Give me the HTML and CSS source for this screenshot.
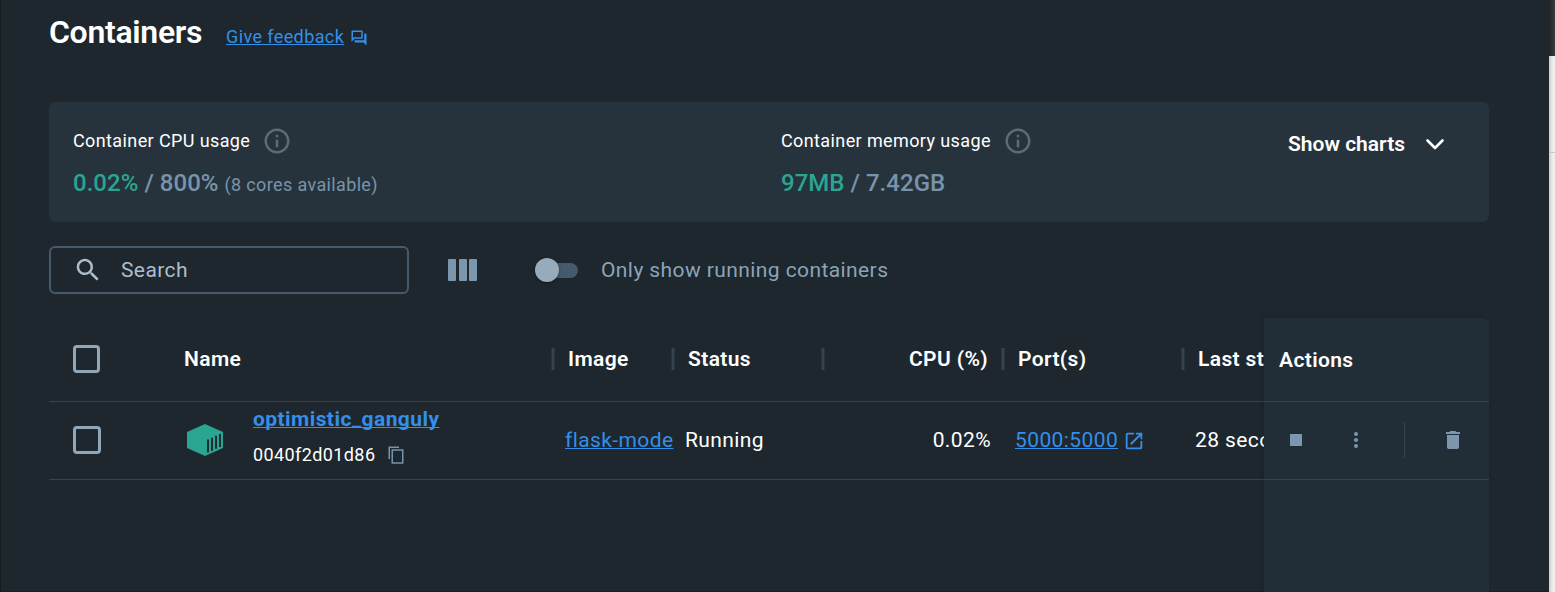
FILE: index.html
```html
<!DOCTYPE html>
<html lang="en">
<head>
<meta charset="utf-8">
<title>Containers</title>
<link rel="stylesheet" href="styles.css">
</head>
<body>
<div class="window">
  <main class="content">
    <header class="page-header">
      <h1 class="title">Containers</h1>
      <a class="feedback" href="#"><span class="feedback-text">Give feedback</span>
        <svg class="feedback-icon" width="18" height="18" viewBox="0 0 24 24" fill="currentColor"><path d="M15 4v7H5.170L4 12.170V4h11m1-2H3c-.550 0-1 .450-1 1v14l4-4h10c.550 0 1-.450 1-1V3c0-.550-.450-1-1-1zm5 4h-2v9H6v2c0 .550.450 1 1 1h11l4 4V7c0-.550-.450-1-1-1z"/></svg>
      </a>
    </header>

    <section class="usage">
      <div class="metric metric-cpu">
        <div class="metric-label"><span class="label-text">Container CPU usage</span>
          <svg class="info" width="30" height="30" viewBox="0 0 24 24" fill="currentColor"><path d="M11 7h2v2h-2zm0 4h2v6h-2zm1-9C6.480 2 2 6.480 2 12s4.480 10 10 10 10-4.480 10-10S17.520 2 12 2zm0 18c-4.410 0-8-3.590-8-8s3.590-8 8-8 8 3.590 8 8-3.590 8-8 8z"/></svg>
        </div>
        <div class="metric-value"><span class="used">0.02%</span> / 800% <span class="note">(8 cores available)</span></div>
      </div>
      <div class="metric metric-memory">
        <div class="metric-label"><span class="label-text">Container memory usage</span>
          <svg class="info" width="30" height="30" viewBox="0 0 24 24" fill="currentColor"><path d="M11 7h2v2h-2zm0 4h2v6h-2zm1-9C6.480 2 2 6.480 2 12s4.480 10 10 10 10-4.480 10-10S17.520 2 12 2zm0 18c-4.410 0-8-3.590-8-8s3.590-8 8-8 8 3.590 8 8-3.590 8-8 8z"/></svg>
        </div>
        <div class="metric-value"><span class="used">97MB</span> / 7.42GB</div>
      </div>
      <div class="show-charts"><span>Show charts</span>
        <svg width="20" height="14" viewBox="0 0 20 14" fill="none" stroke="currentColor" stroke-width="2.600" stroke-linecap="round" stroke-linejoin="round"><path d="M2.500 3.500l7.500 7.500 7.500-7.500"/></svg>
      </div>
    </section>

    <div class="toolbar">
      <div class="search">
        <svg width="30" height="30" viewBox="0 0 24 24" fill="currentColor"><path d="M15.500 14h-.790l-.280-.270C15.410 12.590 16 11.110 16 9.500 16 5.910 13.090 3 9.500 3S3 5.910 3 9.500 5.910 16 9.500 16c1.610 0 3.090-.590 4.230-1.570l.270.280v.790l5 4.990L20.490 19l-4.990-5zm-6 0C7.010 14 5 11.990 5 9.500S7.010 5 9.500 5 14 7.010 14 9.500 11.990 14 9.500 14z"/></svg>
        <span>Search</span>
      </div>
      <div class="columns"><i></i><i></i><i></i></div>
      <div class="switch"><b class="knob"></b></div>
      <span class="switch-label">Only show running containers</span>
    </div>

    <div class="table">
      <div class="scroll">
        <div class="row head">
          <div class="cell check"><i class="box"></i></div>
          <div class="cell h-name">Name</div>
          <div class="cell sep">Image</div>
          <div class="cell sep">Status</div>
          <div class="cell sep right">CPU (%)</div>
          <div class="cell sep">Port(s)</div>
          <div class="cell sep"><span class="clip clip-head">Last started</span></div>
        </div>
        <div class="row body">
          <div class="cell check"><i class="box box-row"></i></div>
          <div class="cell name">
            <svg class="cube" width="38" height="34" viewBox="0 0 38 34"><path fill="#2aa592" d="M19 1L37 9v16l-18 8L1 25V9z"/><path fill="none" stroke="#1d272d" stroke-width="1.900" d="M22 16.500v13M26 14.700v13M30 12.800v13M34 11v13"/></svg>
            <div class="name-text">
              <a class="link strong" href="#">optimistic_ganguly</a>
              <div class="id"><span>0040f2d01d86</span>
                <svg width="16" height="18" viewBox="0 0 16 18" fill="none" stroke="#7794ab" stroke-width="1.500"><path d="M1.250 13V1.250H11"/><rect x="4.250" y="4" width="10.500" height="13"/></svg>
              </div>
            </div>
          </div>
          <div class="cell"><a class="link" href="#">flask-mode</a></div>
          <div class="cell">Running</div>
          <div class="cell right">0.02%</div>
          <div class="cell ports"><a class="link" href="#">5000:5000</a>
            <svg class="external" width="22" height="22" viewBox="0 0 24 24" fill="#348fea"><path d="M19 19H5V5h7V3H5c-1.110 0-2 .900-2 2v14c0 1.100.890 2 2 2h14c1.100 0 2-.900 2-2v-7h-2v7zM14 3v2h3.590l-9.830 9.830 1.410 1.410L19 6.410V10h2V3h-7z"/></svg>
          </div>
          <div class="cell"><span class="clip clip-body">28 seconds ago</span></div>
        </div>
      </div>
      <aside class="actions">
        <div class="actions-head">Actions</div>
        <div class="actions-row">
          <i class="stop"></i>
          <span class="dots"><i></i><i></i><i></i></span>
          <i class="divider"></i>
          <svg class="trash" width="14" height="18" viewBox="0 0 14 18" fill="#7c97ad"><path d="M4.500 0h5l.8 1H14v2H0V1h3.700zM1 4h12v12.200a1.800 1.800 0 0 1-1.800 1.800H2.800A1.800 1.800 0 0 1 1 16.200z"/></svg>
        </div>
      </aside>
    </div>
  </main>
  <div class="edge"><div class="edge-top"></div><div class="edge-mid"></div></div>
</div>
</body>
</html>
```
FILE: styles.css
```css
* { box-sizing: border-box; }
body { margin: 0; background: #1d272d; color: #fff; font-family: Roboto, "Liberation Sans", sans-serif; font-size: 21px; }
.window { display: flex; width: 1555px; height: 592px; overflow: hidden; }
.content { width: 1549px; padding: 0 60px 0 48px; border-left: 1px solid #151c20; border-bottom: 1px solid #182025; }
.page-header { display: flex; height: 102px; }
.title { margin: 13px 0 0; width: 177px; font-size: 32px; line-height: 38px; font-weight: 600; letter-spacing: -0.3px; white-space: nowrap; }
.feedback { display: flex; height: 24px; margin-top: 25px; gap: 6px; color: #348fea; font-size: 18px; line-height: 24px; text-decoration: none; letter-spacing: 0.4px; }
.feedback-text { text-decoration: underline 1px; text-underline-offset: 1px; text-decoration-skip-ink: none; }
.feedback-icon { margin-top: 4px; }

.usage { display: flex; width: 1440px; height: 120px; padding: 24px; border-radius: 6px; background: #27333c; }
.metric-cpu { width: 708px; }
.metric-memory { width: 507px; }
.metric-label { display: flex; align-items: center; height: 30px; gap: 12px; font-size: 18px; letter-spacing: 0.39px; }
.label-text { padding-bottom: 2px; }
.info { color: #5d6b73; }
.metric-value { margin-top: 12px; font-size: 24px; line-height: 30px; font-weight: 500; letter-spacing: 0.03px; color: #7794ab; white-space: nowrap; }
.used { color: #2aa592; }
.note { font-size: 18px; letter-spacing: 0.36px; font-weight: 400; }
.show-charts { display: flex; align-items: center; height: 36px; gap: 20px; font-weight: 600; }

.toolbar { display: flex; align-items: center; height: 48px; margin-top: 24px; }
.search { display: flex; align-items: center; width: 360px; height: 48px; padding-left: 22px; gap: 18px; border: 2px solid #465a6e; border-radius: 6px; color: #adbecb; letter-spacing: 0.4px; }
.columns { display: flex; width: 29px; margin-left: 39px; gap: 2.5px; }
.columns i { width: 8px; height: 22px; border-radius: 1px; background: #7c97ad; }
.switch { display: flex; align-items: center; width: 39px; height: 15px; margin-left: 62px; border-radius: 8px; background: #465a6e; }
.knob { flex: none; width: 24px; height: 24px; margin-left: -4px; border-radius: 50%; background: #96abbc; box-shadow: 0 1px 3px #0006; }
.switch-label { margin-left: 23px; color: #8ba4b7; letter-spacing: 0.41px; white-space: nowrap; }

.table { display: flex; height: 274px; margin-top: 24px; }
.scroll { width: 1215px; overflow: hidden; }
.row { display: grid; grid-template-columns: 135px 366px 120px 150px 180px 180px 84px; border-bottom: 1px solid #35444f; white-space: nowrap; }
.head { height: 84px; font-weight: 600; letter-spacing: 0.38px; }
.body { height: 78px; letter-spacing: 0.4px; }
.cell { display: flex; align-items: center; padding-left: 15px; }
.head .cell { padding-bottom: 1px; }
.body .cell { padding-bottom: 2px; }
.check { padding-left: 24px; }
.box { width: 27px; height: 28px; border: 3px solid #8fa7b9; border-radius: 4px; }
.box-row { width: 28px; }
.head .h-name { padding-left: 0; }
.sep { gap: 13px; padding-left: 1px; }
.sep::before { content: ""; flex: none; width: 2px; height: 22px; border: solid #28353e; border-width: 0 1px; background: #34444f; }
.sep.right { justify-content: space-between; padding-right: 12px; }
.body .right { justify-content: flex-end; padding: 0 9px 2px 0; }
.clip { overflow: hidden; }
.clip-head { width: 66px; }
.clip-body { width: 69px; }
.name { gap: 29px; padding-left: 2px; }
.name-text { display: flex; flex-direction: column; gap: 10px; margin-top: -5px; }
.name-text .link { line-height: 25px; }
.id { display: flex; align-items: center; gap: 13px; height: 25px; font-size: 18px; }
.link { color: #348fea; text-decoration: underline 1px; text-underline-offset: 1px; text-decoration-skip-ink: none; }
.strong { font-weight: 700; letter-spacing: 0.43px; }
.ports { gap: 5px; }
.external { margin-top: 3px; }
.actions { width: 225px; border-radius: 0 6px 0 0; background: #222e37; box-shadow: -2px 0 5px #0002; }
.actions-head { height: 84px; padding: 0 15px; line-height: 84px; font-weight: 600; letter-spacing: 0.38px; border-bottom: 1px solid #35444f; }
.actions-row { display: flex; align-items: center; height: 78px; padding: 0 0 2px 26px; border-bottom: 1px solid #35444f; }
.stop { width: 12px; height: 12px; background: #7c97ad; }
.dots { display: flex; flex-direction: column; gap: 2px; margin-left: 52px; }
.dots i { width: 4px; height: 4px; border-radius: 50%; background: #7c97ad; }
.divider { width: 1px; height: 36px; margin-left: 46px; background: #35444f; }
.trash { margin-left: 41px; }

.edge { width: 6px; background: linear-gradient(90deg, #cfcdcc, #f0efee 4px); }
.edge-top { height: 56px; background: linear-gradient(90deg, #252525, #3c3c3c); }
.edge-mid { height: 97px; border-bottom: 1px solid #c9c9c9; }
```
